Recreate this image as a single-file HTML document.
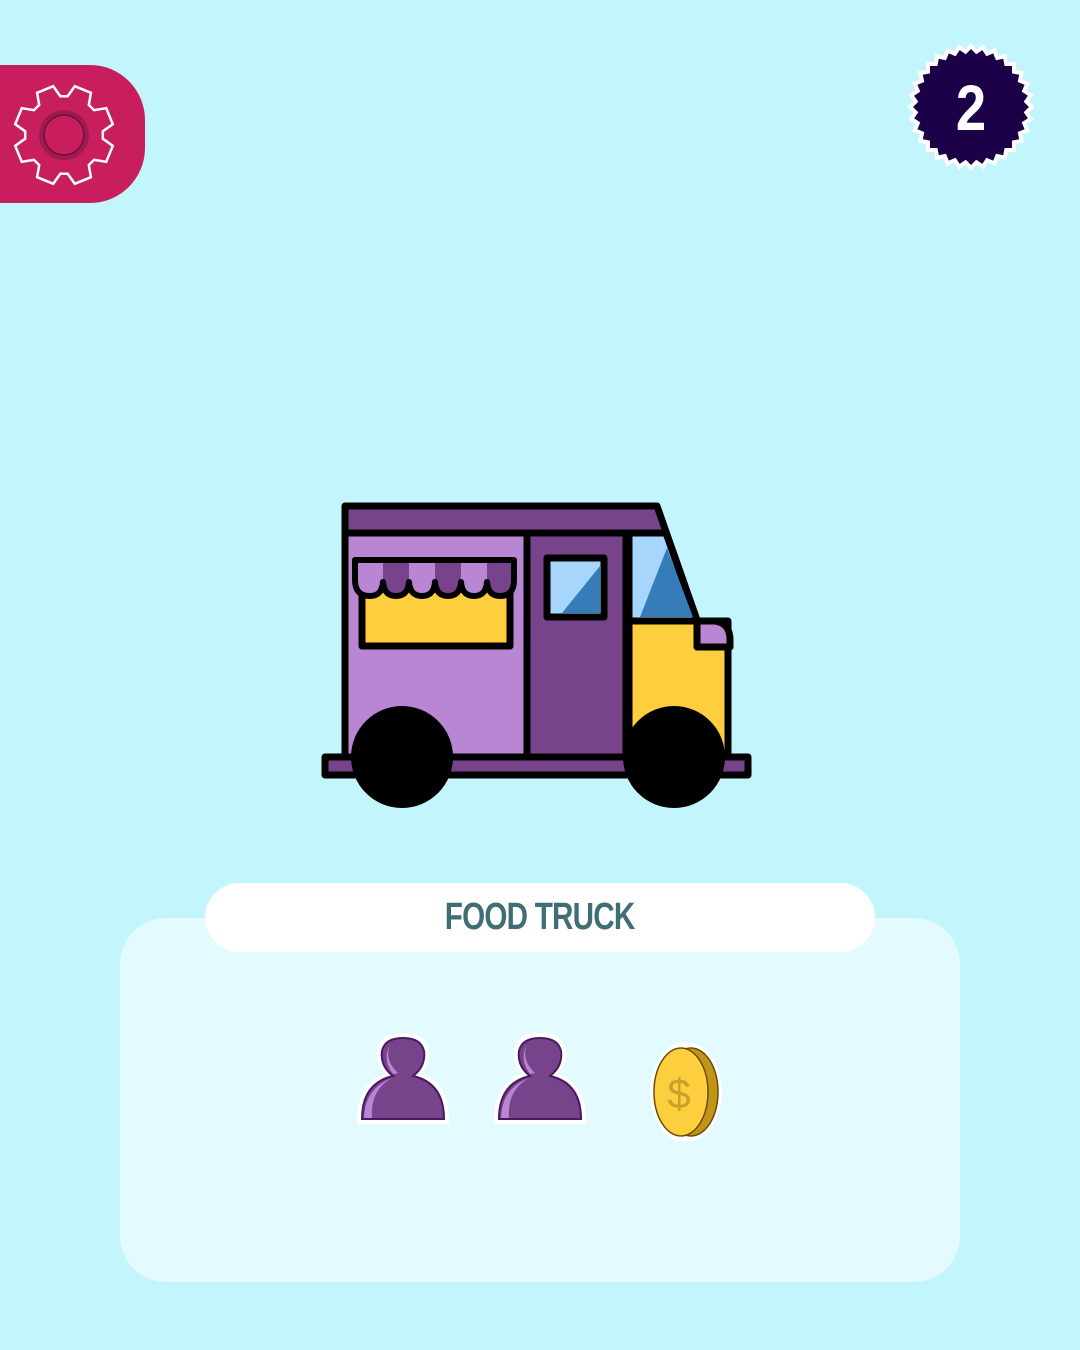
<!DOCTYPE html>
<html><head><meta charset="utf-8"><style>
html,body{margin:0;padding:0}
body{width:1080px;height:1350px;background:#c2f6fc;position:relative;overflow:hidden;font-family:"Liberation Sans",sans-serif}
.gearbox{position:absolute;left:0;top:65px;width:145px;height:138px;background:#c81e5e;border-radius:0 55px 55px 0}
.panel{position:absolute;left:120px;top:918px;width:840px;height:364px;background:#e3fbfe;border-radius:46px}
.pill{position:absolute;left:205px;top:883px;width:670px;height:69px;background:#fff;border-radius:35px;text-align:center;line-height:69px;color:#3f6e74;font-weight:bold;font-size:38px}
.pill span{display:inline-block;transform:scaleX(0.78);letter-spacing:-1px}
</style></head><body>
<div class="gearbox"></div>
<svg style="position:absolute;left:0;top:0" width="1080" height="1350">
 <path id="gear" fill="#c81e5e" stroke="#fff" stroke-width="2.5"/>
 <circle cx="64" cy="135" r="25" fill="#a01a50"/>
 <circle cx="64" cy="135" r="20" fill="#c81e5e" stroke="#6e0f38" stroke-width="1.5"/>
 <path id="star" fill="#fff"/>
 <path id="star2" fill="#1b0048"/>
 <text x="971" y="130" text-anchor="middle" fill="#fff" font-family="Liberation Sans" font-weight="bold" font-size="64" transform="translate(971 0) scale(0.85 1) translate(-971 0)">2</text>
 <!-- truck -->
 <g stroke="#000" stroke-width="7" stroke-linejoin="round">
  <rect x="325" y="757" width="423" height="18" fill="#77438b"/>
  <path d="M345 506 H657 L697 620 H629 V757 H345 Z" fill="#77438b"/>
  <rect x="345" y="533" width="182" height="224" fill="#b986d4"/>
  <rect x="527" y="533" width="99" height="224" fill="#77438b"/>
  <path d="M629 533 H666 L697 621 H629 Z" fill="#a7d6fc"/>
  <path d="M629 621 H728 V757 H629 Z" fill="#fdcf3e"/>
  <path d="M697 621 H715 Q730 623 730 640 V647 H697 Z" fill="#b986d4"/>
  <rect x="362" y="585" width="148" height="61" fill="#fdcf3e"/>
  <rect x="547" y="558" width="57" height="59" fill="#a7d6fc"/>
 </g>
 <path d="M600 566 V613 H562 Z" fill="#357cb8"/>
 <path d="M667 548 L693 617 H640 Z" fill="#357cb8"/>
 <defs><clipPath id="aw"><path d="M355 560 H514 V580 Q514 596 500 596 Q488 596 487 582 Q486 596 474 596 Q462 596 461 582 Q460 596 448 596 Q436 596 435 582 Q434 596 422 596 Q410 596 409 582 Q408 596 396 596 Q384 596 383 582 Q382 596 370 596 Q355 596 355 580 Z"/></clipPath></defs>
 <path d="M355 560 H514 V580 Q514 596 500 596 Q488 596 487 582 Q486 596 474 596 Q462 596 461 582 Q460 596 448 596 Q436 596 435 582 Q434 596 422 596 Q410 596 409 582 Q408 596 396 596 Q384 596 383 582 Q382 596 370 596 Q355 596 355 580 Z" fill="#b986d4"/>
 <g fill="#77438b" clip-path="url(#aw)"><rect x="383" y="560" width="26" height="40"/><rect x="435" y="560" width="26" height="40"/><rect x="487" y="560" width="27" height="40"/></g>
 <path d="M355 560 H514 V580 Q514 596 500 596 Q488 596 487 582 Q486 596 474 596 Q462 596 461 582 Q460 596 448 596 Q436 596 435 582 Q434 596 422 596 Q410 596 409 582 Q408 596 396 596 Q384 596 383 582 Q382 596 370 596 Q355 596 355 580 Z" fill="none" stroke="#000" stroke-width="6" stroke-linejoin="round"/>
 <circle cx="402" cy="757" r="51" fill="#000"/>
 <circle cx="674" cy="757" r="51" fill="#000"/>
</svg>
<div class="panel"></div>
<div class="pill"><span>FOOD TRUCK</span></div>
<svg style="position:absolute;left:0;top:0" width="1080" height="1350">
 <g id="p1">
  <path d="M360 1121 Q360 1082 392 1075 Q378 1065 380 1050 Q383 1036 403 1036 Q423 1036 426 1050 Q428 1065 414 1075 Q446 1082 446 1121 Z" fill="#fff" stroke="#fff" stroke-width="6"/>
  <path d="M362 1119 Q362 1083 393 1076 Q380 1066 382 1051 Q385 1038 403 1038 Q421 1038 424 1051 Q426 1066 413 1076 Q444 1083 444 1119 Z" fill="#77438b" stroke="#4a1a60" stroke-width="2"/>
  <path d="M364 1118 Q365 1088 392 1078 Q370 1090 372 1118 Z M393 1074 Q382 1060 390 1044 Q384 1060 398 1073 Z" fill="#b986d4"/>
 </g>
 <use href="#p1" transform="translate(137,0)"/>
 <ellipse cx="686" cy="1092" rx="36" ry="50" fill="#fff"/>
 <ellipse cx="691" cy="1092" rx="27" ry="44" fill="#c1951a" stroke="#6b4d00" stroke-width="1.5"/>
 <ellipse cx="681" cy="1092" rx="27" ry="44" fill="#fdcf3e" stroke="#6b4d00" stroke-width="1.5"/>
 <text x="679" y="1108" text-anchor="middle" fill="#c9a02a" font-size="42" font-family="Liberation Sans">$</text>
</svg>
<script>
(function(){
 var cx=64,cy=135,R=50,r=39,d="";
 for(var k=0;k<8;k++){var t=k*45+22.5;
  [[t-17,r],[t-10,R],[t+10,R],[t+17,r]].forEach(function(p,i){var a=p[0]*Math.PI/180;
   d+=(k==0&&i==0?"M":"L")+(cx+p[1]*Math.cos(a)).toFixed(1)+" "+(cy+p[1]*Math.sin(a)).toFixed(1)+" ";});}
 document.getElementById("gear").setAttribute("d",d+"Z");
 function st(r1,r2){var s="",n=32;cx=971;cy=107;
 for(var i=0;i<2*n;i++){var a=i*Math.PI/n,rr=i%2?r1:r2;s+=(i?"L":"M")+(cx+rr*Math.cos(a)).toFixed(1)+" "+(cy+rr*Math.sin(a)).toFixed(1)+" ";}
 return s+"Z";}
 document.getElementById("star").setAttribute("d",st(58,64));
 document.getElementById("star2").setAttribute("d",st(53,58));
})();
</script>
</body></html>
